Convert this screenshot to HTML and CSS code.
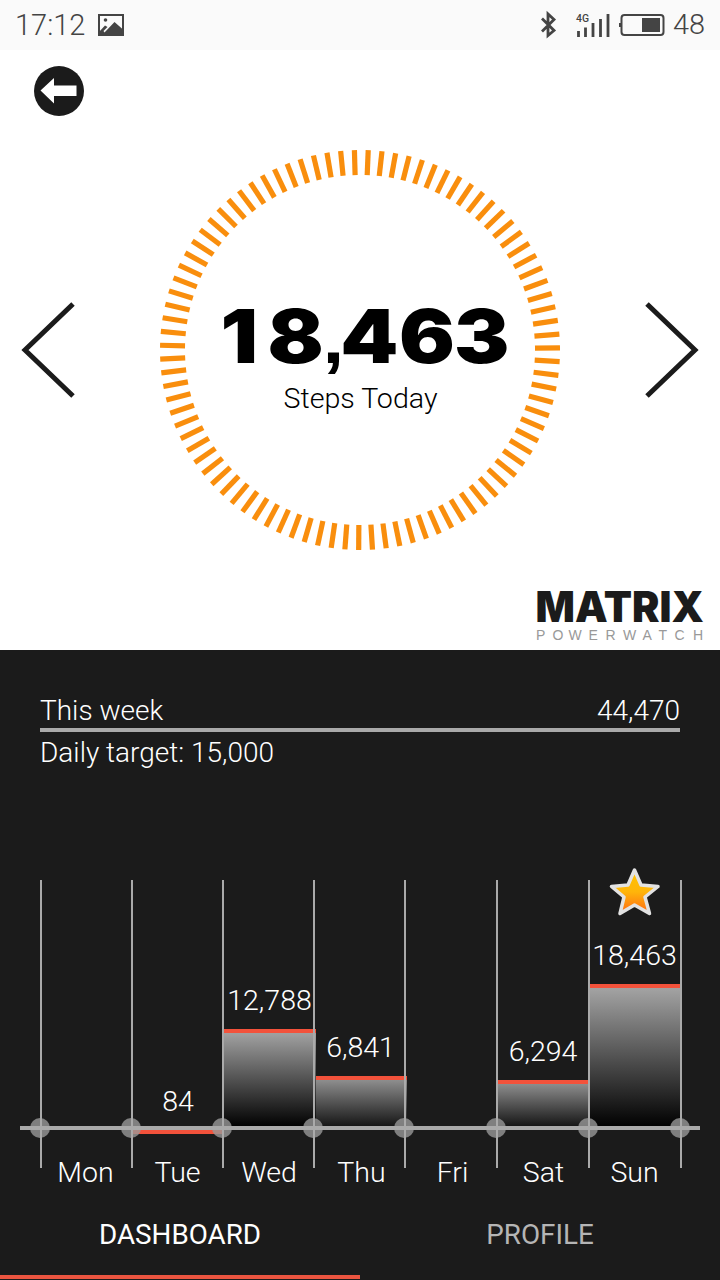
FILE: index.html
```html
<!DOCTYPE html>
<html lang="en">
<head>
    <meta charset="UTF-8">
    <meta name="viewport" content="width=device-width, initial-scale=1.0">
    <title>Matrix PowerWatch</title>
    <link rel="stylesheet" href="styles.css">
</head>
<body>
    <div class="status-bar">
        <div class="status-left">
            <span class="clock">17:12</span>
            <svg class="icon-picture" width="26" height="22" viewBox="0 0 26 22">
                <rect x="1" y="1" width="24" height="20" fill="none" stroke="#444" stroke-width="2"/>
                <circle cx="7.5" cy="6" r="1.8" fill="#444"/>
                <path d="M1 18l6-6.500 2.500 1.500-4 4 1 1.500L16.500 8 25 15.500V21H1z" fill="#444"/>
            </svg>
        </div>
        <svg class="status-right" width="180" height="50" viewBox="0 0 180 50">
            <path d="M2 18.500L14 30.500l-6 5V14l6 5.500L2 31.500" fill="none" stroke="#444" stroke-width="2.800"/>
            <text x="36" y="22" class="network" textLength="13" lengthAdjust="spacingAndGlyphs">4G</text>
            <path d="M38.500 37v-6M45.500 37v-9.500M53 37V23M60.500 37V19M68 37V14" stroke="#444" stroke-width="2.800"/>
            <rect x="81.500" y="15" width="42" height="20" rx="3" fill="none" stroke="#444" stroke-width="2"/>
            <rect x="79" y="23" width="2" height="4" fill="#444"/>
            <rect x="102" y="18" width="18" height="14" fill="#444"/>
            <text x="133" y="34" class="battery" textLength="32" lengthAdjust="spacingAndGlyphs">48</text>
        </svg>
    </div>

    <div class="hero">
        <div class="back">
            <svg width="52" height="52" viewBox="0 0 52 52">
                <circle cx="26" cy="26" r="25" fill="#1b1b1b"/>
                <path d="M7.500 25.500L21 13v7.500h22.500v10.500H21v7.500z" fill="#fff"/>
            </svg>
        </div>
        <div class="dial-row">
            <svg width="56" height="100" viewBox="0 0 56 100">
                <path d="M53 4L5 50l48 46" fill="none" stroke="#1b1b1b" stroke-width="5"/>
            </svg>
            <svg width="400" height="400" viewBox="0 0 400 400">
                <g id="ticks" stroke="#f98e0d" stroke-width="5.200"></g>
                <text class="steps" transform="translate(0 213) scale(1.120 1)" x="54 96 145 161 213.500 262.500">18<tspan class="comma">,</tspan>463</text>
                <text class="steps-label" x="123.500" y="258" textLength="154" lengthAdjust="spacingAndGlyphs">Steps Today</text>
            </svg>
            <svg width="56" height="100" viewBox="0 0 56 100">
                <path d="M3 4l48 46L3 96" fill="none" stroke="#1b1b1b" stroke-width="5"/>
            </svg>
        </div>
        <svg class="logo" width="184" height="66" viewBox="0 0 184 66">
            <text class="logo-name" x="-0.500" y="38" textLength="168.500" lengthAdjust="spacingAndGlyphs">MATRIX</text>
            <text class="logo-sub" y="56" x="0 16.500 32.500 52.500 69.500 87 106.500 122.500 138.500 157">POWERWATCH</text>
        </svg>
    </div>

    <div class="week">
        <div class="week-total">
            <span>This week</span>
            <span>44,470</span>
        </div>
        <div class="target">Daily target: 15,000</div>
    </div>

    <svg class="chart" width="720" height="330" viewBox="0 860 720 330">
        <defs>
            <linearGradient id="bar" x1="0" y1="0" x2="0" y2="1">
                <stop offset="0" stop-color="#a8a8a8"/>
                <stop offset="1" stop-color="#000"/>
            </linearGradient>
            <linearGradient id="small-bar" x1="0" y1="0" x2="0" y2="1">
                <stop offset="0" stop-color="#989898"/>
                <stop offset="1" stop-color="#141414"/>
            </linearGradient>
            <linearGradient id="gold" x1="0" y1="0" x2="0" y2="1">
                <stop offset="0" stop-color="#ffc400"/>
                <stop offset="0.500" stop-color="#ffb50a"/>
                <stop offset="1" stop-color="#ff6a14"/>
            </linearGradient>
        </defs>
        <rect x="224" y="1029" width="92" height="98" fill="url(#bar)"/>
        <rect x="316" y="1076" width="91" height="51" fill="url(#small-bar)"/>
        <rect x="498" y="1080" width="90" height="47" fill="url(#small-bar)"/>
        <rect x="590" y="984" width="90" height="143" fill="url(#bar)"/>
        <g fill="#f3523b">
            <rect x="132" y="1130" width="90" height="4"/>
            <rect x="224" y="1029" width="92" height="4"/>
            <rect x="316" y="1076" width="91" height="4"/>
            <rect x="498" y="1080" width="90" height="4"/>
            <rect x="590" y="984" width="90" height="4"/>
        </g>
        <g fill="#999" fill-opacity="0.8">
            <circle cx="40" cy="1128" r="10"/>
            <circle cx="131" cy="1128" r="10"/>
            <circle cx="222" cy="1128" r="10"/>
            <circle cx="313" cy="1128" r="10"/>
            <circle cx="404" cy="1128" r="10"/>
            <circle cx="496" cy="1128" r="10"/>
            <circle cx="588" cy="1128" r="10"/>
            <circle cx="680" cy="1128" r="10"/>
        </g>
        <path d="M41 880v288M132 880v288M223 880v288M314 880v288M405 880v288M497 880v288M589 880v288M681 880v288" stroke="#aaa" stroke-width="2"/>
        <rect x="20" y="1126" width="680" height="4" fill="#aaa"/>
        <path d="M634.500 870l6.500 15 17 1.500-13 10.500 4.500 16.500-15-8.500-14.500 8.500 4-16.500-12.500-10.500 16.500-1.500z" fill="url(#gold)" stroke="#e2e2e2" stroke-width="3.500" stroke-linejoin="round"/>
        <g class="chart-text">
            <text x="178" y="1111">84</text>
            <text x="269.500" y="1010">12,788</text>
            <text x="360.500" y="1057">6,841</text>
            <text x="543" y="1061">6,294</text>
            <text x="634.500" y="965">18,463</text>
            <text x="85.500" y="1182">Mon</text>
            <text x="177.500" y="1182">Tue</text>
            <text x="269" y="1182">Wed</text>
            <text x="361.500" y="1182">Thu</text>
            <text x="452.500" y="1182">Fri</text>
            <text x="543.500" y="1182">Sat</text>
            <text x="634.500" y="1182">Sun</text>
        </g>
    </svg>

    <div class="tabs">
        <div class="tab active">DASHBOARD</div>
        <div class="tab">PROFILE</div>
    </div>

    <script>
        const ticks = document.getElementById('ticks');
        const count = 91;

        for (let i = 0; i < count; i++) {
            const line = document.createElementNS('http://www.w3.org/2000/svg', 'line');
            line.setAttribute('x1', 200);
            line.setAttribute('x2', 200);
            line.setAttribute('y1', 0);
            line.setAttribute('y2', 25);
            line.setAttribute('transform', `rotate(${-1.6 + i * 360 / count} 200 200)`);
            ticks.appendChild(line);
        }
    </script>
</body>
</html>
```
FILE: styles.css
```css
body {
    font-family: Roboto, "Liberation Sans", sans-serif;
    font-weight: 300;
    margin: 0;
    width: 720px;
    height: 1280px;
    overflow: hidden;
    background-color: #1b1b1b;
    color: #fff;
}
svg {
    display: block;
}
.status-bar {
    display: flex;
    justify-content: space-between;
    height: 50px;
    background-color: #fafafa;
    color: #444;
}
.status-left {
    display: flex;
    align-items: center;
    padding-left: 15px;
    gap: 13px;
}
.clock {
    font-size: 29px;
    line-height: 50px;
}
.network {
    font-size: 11px;
    font-weight: 500;
    fill: #444;
}
.battery {
    font-size: 28px;
    fill: #444;
}
.hero {
    height: 600px;
    background-color: #fff;
    overflow: hidden;
}
.back {
    padding: 15px 0 0 33px;
    height: 85px;
}
.dial-row {
    display: flex;
    align-items: center;
    justify-content: space-between;
    padding: 0 20px;
    height: 400px;
}
.steps {
    font-family: Inter, "Liberation Sans", sans-serif;
    font-size: 74px;
    font-weight: 900;
}
.comma {
    font-family: "Liberation Sans", sans-serif;
    font-size: 70px;
    font-weight: 700;
}
.steps-label {
    font-size: 28px;
}
.logo {
    margin: 34px 0 0 536px;
    overflow: visible;
}
.logo-name {
    font-family: Inter, sans-serif;
    font-size: 43px;
    font-weight: 900;
    fill: #1b1b1b;
}
.logo-sub {
    font-family: "Liberation Sans", sans-serif;
    font-size: 14px;
    fill: #999;
}
.week {
    padding: 42px 40px 0;
    height: 168px;
    font-size: 28px;
}
.week-total {
    display: flex;
    justify-content: space-between;
    height: 36px;
    line-height: 38px;
    border-bottom: 4px solid #aaa;
}
.target {
    line-height: 42px;
}
.chart-text {
    font-size: 28.5px;
    fill: #fff;
    text-anchor: middle;
}
.tabs {
    display: flex;
    height: 90px;
}
.tab {
    flex: 1;
    height: 85px;
    line-height: 89px;
    text-align: center;
    font-size: 27.8px;
    font-weight: 400;
    color: #b5b5b5;
}
.tab.active {
    color: #fff;
    border-bottom: 4px solid #ec5540;
}
```
